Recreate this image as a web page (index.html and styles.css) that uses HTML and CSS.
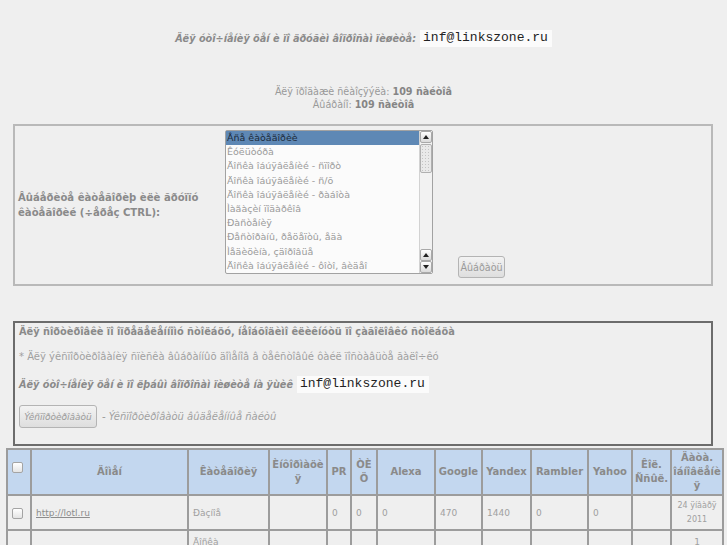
FILE: index.html
```html
<!DOCTYPE html>
<html>
<head>
<meta charset="utf-8">
<title>Links</title>
<link rel="stylesheet" href="styles.css">
</head>
<body>
<div class="contact">
  <span class="contact-text">Äëÿ óòî÷íåíèÿ öåí è ïî äðóãèì âîïðîñàì ïèøèòå:</span>
  <code class="mail">inf@linkszone.ru</code>
</div>

<div class="stats">
  <div>Äëÿ ïðîäàæè ñêàîçÿýëà: <b>109 ñàéòîâ</b></div>
  <div>Âûáðàíî: <b>109 ñàéòîâ</b></div>
</div>

<form class="filter">
  <label class="filter-label">Âûáåðèòå êàòåãîðèþ èëè ãðóïïó êàòåãîðèé (÷åðåç CTRL):</label>
  <div class="listbox">
    <ul class="options">
      <li class="selected">Âñå êàòåãîðèè</li>
      <li>Êóëüòóðà</li>
      <li>Äîñêà îáúÿâëåíèé - ñïîðò</li>
      <li>Äîñêà îáúÿâëåíèé - ñ/õ</li>
      <li>Äîñêà îáúÿâëåíèé - ðàáîòà</li>
      <li>Ìàãàçèí ïîäàðêîâ</li>
      <li>Ðàñòåíèÿ</li>
      <li>Ðåñòîðàíû, ðåöåïòû, åäà</li>
      <li>Ìåäèöèíà, çäîðîâüå</li>
      <li>Äîñêà îáúÿâëåíèé - ôîòî, âèäåî</li>
    </ul>
    <div class="scrollbar">
      <span class="sb-btn"><i class="tri-up"></i></span>
      <span class="sb-thumb"></span>
      <span class="sb-track"></span>
      <span class="sb-btn"><i class="tri-up"></i></span>
      <span class="sb-btn"><i class="tri-down"></i></span>
    </div>
  </div>
  <button type="button" class="btn btn-select">Âûáðàòü</button>
</form>

<div class="notes">
  <p class="note-head">Äëÿ ñîðòèðîâêè ïî îïðåäåëåííîìó ñòîëáöó, íåîáõîäèìî êëèêíóòü ïî çàãîëîâêó ñòîëáöà</p>
  <p class="note-small">* Äëÿ ýêñïîðòèðîâàíèÿ ñïèñêà âûáðàííûõ äîìåíîâ â òåêñòîâûé ôàéë ïîñòàâüòå ãàëî÷êó</p>
  <p class="note-mail"><span class="contact-text">Äëÿ óòî÷íåíèÿ öåí è ïî ëþáûì âîïðîñàì ïèøèòå íà ÿùèê</span> <code class="mail">inf@linkszone.ru</code></p>
  <p class="note-export"><button type="button" class="btn btn-export">Ýêñïîðòèðîâàòü</button> - Ýêñïîðòèðîâàòü âûäåëåííûå ñàéòû</p>
</div>

<table class="sites">
  <colgroup>
    <col class="c-cb"><col class="c-dom"><col class="c-cat"><col class="c-info"><col class="c-pr"><col class="c-tic"><col class="c-alexa"><col class="c-google"><col class="c-yandex"><col class="c-rambler"><col class="c-yahoo"><col class="c-kol"><col class="c-date">
  </colgroup>
  <thead>
    <tr>
      <th class="th-cb"><span class="cb"></span></th>
      <th>Äîìåí</th>
      <th>Êàòåãîðèÿ</th>
      <th>Èíôîðìàöèÿ</th>
      <th>PR</th>
      <th>ÒÈÖ</th>
      <th>Alexa</th>
      <th>Google</th>
      <th>Yandex</th>
      <th>Rambler</th>
      <th>Yahoo</th>
      <th>Êîë. Ññûë.</th>
      <th>Äàòà. îáíîâëåíèÿ</th>
    </tr>
  </thead>
  <tbody>
    <tr class="r1">
      <td><span class="cb"></span></td>
      <td><a href="#">http://lotl.ru</a></td>
      <td>Ðàçíîå</td>
      <td></td>
      <td>0</td>
      <td>0</td>
      <td>0</td>
      <td>470</td>
      <td>1440</td>
      <td>0</td>
      <td>0</td>
      <td></td>
      <td class="date"><span class="nw">24 ÿíâàðÿ</span> 2011</td>
    </tr>
    <tr class="r2">
      <td class="mid"><span class="cb"></span></td>
      <td class="mid"><a href="#">http://doska.ru</a></td>
      <td>Äîñêà îáúÿâëåíèé - ðàáîòà</td>
      <td></td>
      <td class="mid">0</td>
      <td class="mid">0</td>
      <td class="mid">0</td>
      <td class="mid">12</td>
      <td class="mid">35</td>
      <td class="mid">0</td>
      <td class="mid">0</td>
      <td></td>
      <td class="date">1 ñåíòÿáðÿ 2011</td>
    </tr>
  </tbody>
</table>
</body>
</html>
```

FILE: styles.css
```css
html, body {
  margin: 0;
  background: #efefef;
}
body {
  font-family: "DejaVu Sans", Verdana, sans-serif;
  font-size: 10px;
  color: #8e8e8e;
}

/* top contact line */
.contact {
  display: flex;
  justify-content: center;
  align-items: center;
  gap: 4px;
  padding-top: 30px;
  height: 17px;
}
.contact-text {
  font-weight: bold;
  font-style: italic;
  font-size: 9.7px;
  color: #8a8a8a;
}
.mail {
  font-family: "Liberation Mono", "Courier New", monospace;
  font-size: 13px;
  line-height: 16px;
  color: #222;
  background: #fbfbfb;
  padding: 0 4px 1px 3px;
}

/* stats */
.stats {
  margin-top: 38px;
  text-align: center;
  font-size: 9.6px;
  line-height: 13px;
  color: #999;
}
.stats b {
  color: #858585;
}

/* category filter */
.filter {
  box-sizing: border-box;
  width: 700px;
  height: 162px;
  margin: 13px 0 0 13px;
  border: 2px solid #b9b9b9;
  display: flex;
  align-items: flex-start;
  padding: 4px 0 0 3px;
}
.filter-label {
  flex: 0 0 207px;
  margin-top: 60px;
  font-weight: bold;
  font-size: 10.1px;
  line-height: 15px;
  color: #8a8a8a;
}
.listbox {
  box-sizing: border-box;
  width: 208px;
  height: 144px;
  border: 1px solid #a2a2a2;
  border-radius: 2px;
  background: #fbfbfb;
  display: flex;
}
.options {
  list-style: none;
  margin: 0;
  padding: 0;
  flex: 1;
  overflow: hidden;
  font-size: 9.5px;
}
.options li {
  height: 14.2px;
  line-height: 14.2px;
  padding-left: 1px;
  white-space: nowrap;
  color: #9a9a9a;
}
.options li.selected {
  background: #5e88b5;
  color: #1c2a3a;
}
.scrollbar {
  width: 12px;
  display: flex;
  flex-direction: column;
  border-left: 1px solid #d2d2d2;
  background-color: #f2f2f2;
  background-image: radial-gradient(#d6d6d6 0.6px, transparent 0.7px);
  background-size: 2px 2px;
}
.sb-btn {
  box-sizing: border-box;
  height: 12px;
  border: 1px solid #a9a9a9;
  border-radius: 2px;
  background: linear-gradient(#ffffff, #dadada);
  display: flex;
  align-items: center;
  justify-content: center;
}
.sb-thumb {
  box-sizing: border-box;
  height: 29px;
  margin-top: 1px;
  border: 1px solid #b0b0b0;
  border-radius: 2px;
  background-color: #e9e9e9;
  background-image: radial-gradient(#c4c4c4 0.7px, transparent 0.8px);
  background-size: 3px 3px;
}
.sb-track {
  flex: 1;
}
.tri-up, .tri-down {
  width: 0;
  height: 0;
  border-left: 3px solid transparent;
  border-right: 3px solid transparent;
}
.tri-up { border-bottom: 4px solid #222; }
.tri-down { border-top: 4px solid #222; }

.btn {
  font-family: "DejaVu Sans", Verdana, sans-serif;
  color: #9a9a9a;
  border: 1px solid #b4b4b4;
  border-radius: 3px;
  background: linear-gradient(#f3f3f3, #dedede);
  padding: 0;
}
.btn-select {
  align-self: flex-end;
  margin: 0 0 6px 25px;
  width: 47px;
  height: 22px;
  font-size: 9.6px;
}

/* notes block */
.notes {
  box-sizing: border-box;
  width: 700px;
  height: 125px;
  margin: 35px 0 0 13px;
  border: 2px solid #6c6c6c;
  padding: 2px 4px 0 4px;
}
.notes p {
  margin: 0;
}
.note-head {
  font-weight: bold;
  font-size: 9.8px;
  line-height: 13px;
  color: #8a8a8a;
}
.note-small {
  margin-top: 12px !important;
  font-size: 10px;
  line-height: 13px;
  color: #a0a0a0;
}
.note-mail {
  margin-top: 13px !important;
  display: flex;
  align-items: center;
  gap: 4px;
  height: 17px;
}
.note-export {
  margin-top: 12px !important;
  display: flex;
  align-items: center;
  gap: 5px;
  font-style: italic;
  font-size: 10px;
  color: #a0a0a0;
}
.btn-export {
  width: 78px;
  height: 23px;
  font-size: 9px;
  font-style: italic;
}

/* table */
.sites {
  margin: 2px 0 0 6px;
  width: 716px;
  table-layout: fixed;
  border-collapse: collapse;
  border: 2px solid #9c9c9c;
}
.c-cb { width: 24px; }
.c-dom { width: 157px; }
.c-cat { width: 81px; }
.c-info { width: 58px; }
.c-pr { width: 24px; }
.c-tic { width: 26px; }
.c-alexa { width: 58px; }
.c-google { width: 47px; }
.c-yandex { width: 49px; }
.c-rambler { width: 57px; }
.c-yahoo { width: 44px; }
.c-kol { width: 39px; }
.c-date { width: 52px; }

.sites th, .sites td {
  border: 2px solid #9c9c9c;
  overflow: hidden;
}
.sites th {
  background: #c3d7ef;
  font-weight: bold;
  font-size: 10px;
  line-height: 14px;
  color: #8a8a8a;
  text-align: center;
  padding: 0 1px;
  height: 46px;
  box-sizing: border-box;
  overflow-wrap: anywhere;
}
.sites th.th-cb {
  vertical-align: top;
  padding: 10px 0 0 4px;
  text-align: left;
}
.sites td {
  font-size: 9px;
  line-height: 14px;
  color: #a0a0a0;
  text-align: left;
  vertical-align: middle;
  padding: 0 4px;
}
.sites tr.r1 td {
  height: 35px;
  box-sizing: border-box;
}
.sites tr.r2 td {
  vertical-align: top;
  padding-top: 4px;
}
.sites tr.r2 td.mid {
  vertical-align: middle;
}
.sites td.date {
  text-align: center;
  padding: 0 3px;
  font-size: 8px;
}
.sites tr.r2 td.date {
  padding-top: 4px;
  font-size: 9px;
}
.nw {
  white-space: nowrap;
}
.sites a {
  color: #8c8c8c;
  text-decoration: underline;
}
.cb {
  display: inline-block;
  box-sizing: border-box;
  width: 11px;
  height: 11px;
  border: 1px solid #a4a4a4;
  border-radius: 2px;
  background: linear-gradient(#ffffff, #e4e4e4);
  vertical-align: middle;
}
```
